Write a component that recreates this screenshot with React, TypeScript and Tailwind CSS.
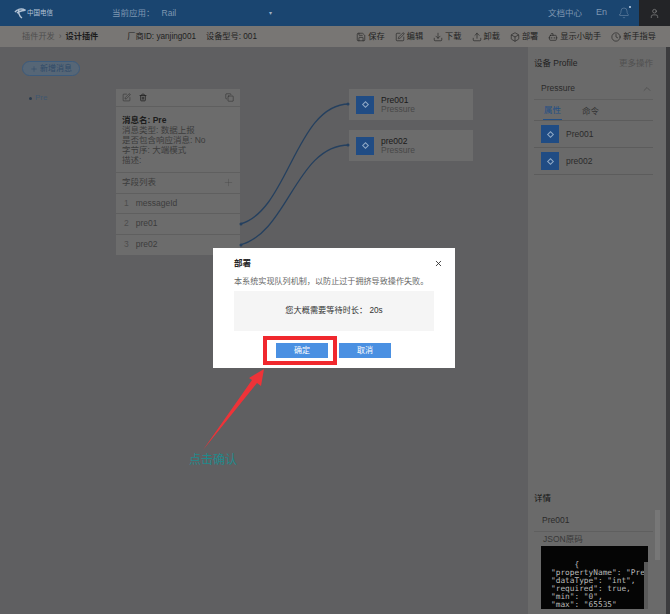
import React from 'react';
import { Bell, ChevronUp, Copy, Download, Plus, Save, SquarePen, Trash2, Upload, User, X, Clock, Bot, Box } from 'lucide-react';

const TOOLS = [
  { label: '保存', Icon: Save },
  { label: '编辑', Icon: SquarePen },
  { label: '下载', Icon: Download },
  { label: '卸载', Icon: Upload },
  { label: '部署', Icon: Box },
  { label: '显示小助手', Icon: Bot },
  { label: '新手指导', Icon: Clock },
];

const FIELDS = ['messageId', 'pre01', 'pre02'];

function PropIcon() {
  return (
    <div className="w-[18px] h-[18px] bg-[#204c84] flex items-center justify-center shrink-0">
      <div className="w-[5px] h-[5px] rotate-45 border border-[#8fa9c6]" />
    </div>
  );
}

function PropCard({ name, className }: { name: string; className: string }) {
  return (
    <div className={`absolute left-[349px] w-[124px] h-[31px] bg-[#6c6c6c] flex items-center pl-[7px] gap-[7px] ${className}`}>
      <PropIcon />
      <div className="leading-[9px]">
        <div className="text-[8.5px] text-[#1a1a1a]">{name}</div>
        <div className="text-[8.5px] text-[#484848]">Pressure</div>
      </div>
    </div>
  );
}

export default function App() {
  return (
    <div className="relative w-[670px] h-[614px] overflow-hidden bg-[#5f5f61] text-[#2a2a2a] flex flex-col" style={{ fontFamily: '"Liberation Sans", "Noto Sans CJK SC", sans-serif' }}>
      {/* header */}
      <header className="h-[26px] bg-[#1a4570] flex items-center shrink-0 text-[8.5px] text-[#7f97b0]">
        <div className="w-[112px] pl-[14px] flex items-center gap-[1px] text-[#b4c4d6]">
          <svg width="12" height="12" viewBox="0 0 12 12" fill="none" stroke="#b4c4d6" strokeWidth="1.5">
            <path d="M1 5c2-3 7-4 10-2-2 1-6 1-8 3M5 2c-1 3 0 7 3 9" />
          </svg>
          <span className="text-[6.5px]">中国电信</span>
        </div>
        <span>当前应用：</span>
        <span className="ml-[7px]">Rail</span>
        <span className="ml-[93px] text-[6px] text-[#9fb2c6]">▾</span>
        <div className="ml-auto flex items-center h-full">
          <span>文档中心</span>
          <span className="ml-[14px] text-[9px]">En</span>
          <div className="relative ml-[11px]">
            <Bell className="w-[12px] h-[12px]" strokeWidth={1} />
            <span className="absolute -right-[1px] -top-[1px] w-[2px] h-[2px] rounded-full bg-[#c4d6ea]" />
          </div>
          <div className="ml-[9px] w-[31px] h-full bg-[#232427] flex items-center justify-center">
            <User className="w-[11px] h-[11px] text-[#8a8a8a]" strokeWidth={1.5} />
          </div>
        </div>
      </header>

      {/* sub header */}
      <div className="h-[21px] bg-[#787674] flex items-center shrink-0 pl-[22px] pr-[14px] pt-[1px] text-[8.2px]">
        <span className="text-[#4e4e4e]">插件开发</span>
        <span className="mx-[4px] text-[#4e4e4e]">›</span>
        <span className="font-bold text-[#1c1c1c]">设计插件</span>
        <span className="ml-[29px] text-[#1f1f1f]">厂商ID: yanjing001</span>
        <span className="ml-[10px] text-[#1f1f1f]">设备型号: 001</span>
        <div className="ml-auto flex items-center gap-[10px] text-[#222]">
          {TOOLS.map(({ label, Icon }) => (
            <span key={label} className="flex items-center gap-[2px]">
              <Icon className="w-[10px] h-[10px]" strokeWidth={1.5} />
              {label}
            </span>
          ))}
        </div>
      </div>

      <div className="flex flex-1 min-h-0">
        {/* canvas */}
        <main className="w-[528px] shrink-0 bg-[#5f5f61]" />

        {/* right panel */}
        <aside className="w-[138px] shrink-0 bg-[#6a6a6a] flex flex-col pl-[6px] pr-[13px] text-[8.5px]">
          <div className="h-[31px] flex items-center justify-between pt-[1px]">
            <span className="text-[#222]">设备 Profile</span>
            <span className="text-[#505050]">更多操作</span>
          </div>
          <div className="h-[22px] flex items-center justify-between pl-[7px] text-[#2a2a2a] border-b border-[#5f5f5f]">
            <span>Pressure</span>
            <ChevronUp className="w-[12px] h-[12px] text-[#3c3c3c]" strokeWidth={1} />
          </div>
          <div className="h-[20px] mt-[1px] flex items-end gap-[20px] px-[9px] border-b border-[#5c5c5c]">
            <span className="text-[#234f85] border-b border-[#234f85] pb-[2px] px-[1px]">属性</span>
            <span className="text-[#333] pb-[2px]">命令</span>
          </div>
          {['Pre001', 'pre002'].map(name => (
            <div key={name} className="h-[27px] flex items-center gap-[7px] pl-[7px] border-b border-[#5c5c5c]">
              <PropIcon />
              <span className="text-[#2a2a2a]">{name}</span>
            </div>
          ))}
          <div className="mt-auto h-[128px] flex flex-col">
            <div className="h-[24px] flex items-center text-[#151515]">详情</div>
            <div className="h-[22px] flex items-center pl-[8px] text-[#2a2a2a] border-b border-[#5f5f5f]">Pre001</div>
            <div className="h-[14px] flex items-center pl-[9px] text-[#383838]">JSON原码</div>
            <div className="relative h-[63px] ml-[7px] w-[107px] bg-[#050505] overflow-hidden">
              <pre className="text-[#b9b9b9] text-[7.8px] leading-[8px] pl-[10px] pt-[15px] m-0" style={{ fontFamily: '"DejaVu Sans Mono", monospace' }}>
                {'     {\n"propertyName": "Pre\n"dataType": "int",\n"required": true,\n"min": "0",\n"max": "65535"'}
              </pre>
              <div className="absolute right-0 top-[16px] bottom-0 w-[4px] bg-[#5a5a5a]" />
            </div>
          </div>
        </aside>
        <div className="w-[4px] shrink-0 bg-[#3c3c3e]" />
      </div>

      {/* panel scrollbar */}
      <div className="absolute left-[655px] top-[510px] w-[5px] h-[50px] bg-[#777777]" />

      {/* canvas items */}
      <div className="absolute left-[22px] top-[61px] w-[58px] h-[15px] rounded-full border border-[#3c5b7c] bg-[#566676] flex items-center justify-center gap-[2px] text-[8px] text-[#2f4a68]">
        <Plus className="w-[8px] h-[8px]" strokeWidth={1.5} />
        新增消息
      </div>
      <div className="absolute left-[29px] top-[92px] flex items-center gap-[3px] text-[8px] text-[#3f5770]">
        <span className="w-[3px] h-[3px] rounded-full bg-[#2a3b4d]" />
        Pre
      </div>

      <div className="absolute left-[116px] top-[89px] w-[124px] h-[166px] bg-[#6c6c6c] flex flex-col text-[8.5px]">
        <div className="h-[18px] flex items-center gap-[8px] px-[6px] text-[#222] border-b border-[#5f5f5f]">
          <SquarePen className="w-[9px] h-[9px]" strokeWidth={1.2} />
          <Trash2 className="w-[8px] h-[9px]" strokeWidth={2.4} />
          <Copy className="w-[9px] h-[9px] ml-auto" strokeWidth={1.2} />
        </div>
        <div className="h-[66px] pl-[6px] pt-[8px] leading-[10px] text-[#3c3c3c] border-b border-[#5f5f5f]">
          <div className="font-bold text-[#1c1c1c]">消息名: Pre</div>
          <div>消息类型: 数据上报</div>
          <div>是否包含响应消息: No</div>
          <div>字节序: 大端模式</div>
          <div>描述:</div>
        </div>
        <div className="h-[21px] flex items-center justify-between px-[6px] text-[#3c3c3c] border-b border-[#5f5f5f]">
          字段列表
          <Plus className="w-[11px] h-[11px] text-[#4a4a4a]" strokeWidth={1} />
        </div>
        {FIELDS.map((f, i) => (
          <div key={f} className="h-[20.5px] flex items-center gap-[7px] px-[8px] text-[#3c3c3c] border-b border-[#5f5f5f] last:border-b-0">
            <span className="text-[#4c4c4c]">{i + 1}</span>
            {f}
          </div>
        ))}
      </div>

      <PropCard name="Pre001" className="top-[89px]" />
      <PropCard name="pre002" className="top-[130px]" />

      {/* connector lines and annotation arrow */}
      <svg className="absolute left-0 top-0 pointer-events-none" width="670" height="614" fill="none">
        <path d="M240 224 C288 212 296 104 349 104" stroke="#25405f" strokeWidth="1.3" />
        <path d="M240 245 C288 233 296 145 349 145" stroke="#25405f" strokeWidth="1.3" />
        <circle cx="348" cy="104" r="1.5" fill="#25405f" />
        <circle cx="348" cy="145" r="1.5" fill="#25405f" />
        <circle cx="241" cy="224" r="1.5" fill="#25405f" />
        <circle cx="241" cy="245" r="1.5" fill="#25405f" />
        <path d="M203 450 L252 380 L249 378 L264 369 L261 386 L257 383 Z" fill="#ee3338" />
      </svg>

      {/* deploy dialog */}
      <div className="absolute left-[213px] top-[248px] w-[242px] h-[120px] bg-white flex flex-col px-[21px]">
        <div className="h-[28px] pt-[3px] flex items-center justify-between">
          <span className="text-[8.5px] font-bold text-[#222]">部署</span>
          <X className="w-[9px] h-[9px] text-[#222] -mr-[9px]" strokeWidth={2.2} />
        </div>
        <p className="text-[8.1px] leading-[11px] text-[#666] whitespace-nowrap">本系统实现队列机制，以防止过于拥挤导致操作失败。</p>
        <div className="mt-[4px] h-[40px] bg-[#f5f5f5] flex items-center justify-center text-[8.2px] text-[#333]">您大概需要等待时长： 20s</div>
        <div className="mt-[12px] flex gap-[11px] pl-[42px]">
          <div className="relative w-[52px] h-[15px] bg-[#4a90e2] flex items-center justify-center text-[8px] text-white">
            确定
            <div className="absolute -left-[13px] -right-[9px] -inset-y-[7px] border-[4px] border-[#f0282e]" />
          </div>
          <div className="w-[52px] h-[15px] bg-[#4a90e2] flex items-center justify-center text-[8px] text-white">取消</div>
        </div>
      </div>

      {/* annotation */}
      <span className="absolute left-[189px] top-[451px] text-[12px] text-[#1f8a8c]">点击确认</span>
    </div>
  );
}
